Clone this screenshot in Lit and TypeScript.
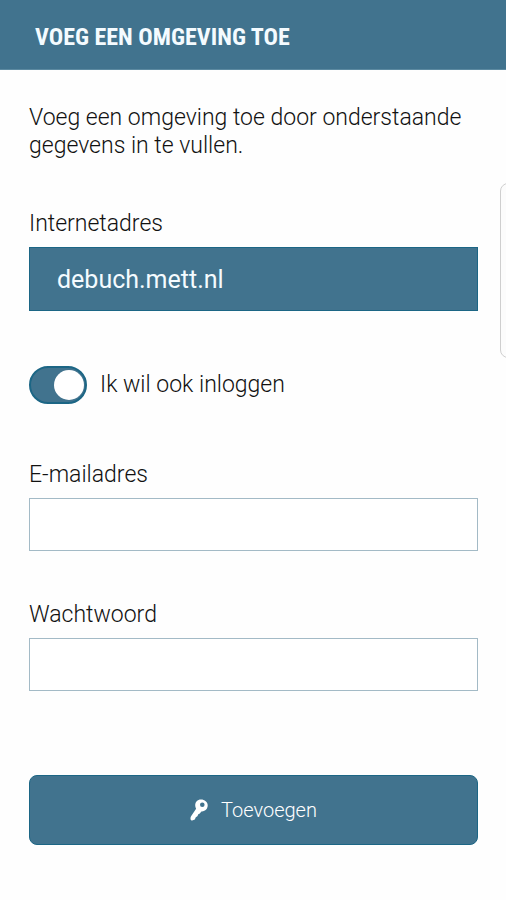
import { LitElement, html, css } from "lit";
import { customElement, state } from "lit/decorators.js";

@customElement("app-root")
export class AppRoot extends LitElement {
  @state() private login = true;

  static styles = css`
    :host {
      --brand: #41738e;
      --edge: #1c6685;
      display: block;
      position: relative;
      min-height: 100vh;
      overflow: hidden;
      background: #fefefe;
      color: #111;
      font: 300 23px/28px Roboto, "Liberation Sans", sans-serif;
    }
    * {
      box-sizing: border-box;
    }
    .bar {
      display: flex;
      align-items: center;
      height: 70px;
      padding: 4px 35px 0;
      background: var(--brand);
      border-bottom: 1px solid #5c8aa1;
      color: #f4fbff;
    }
    .title {
      margin: 0;
      font: 700 24px/28px "Roboto Condensed", Roboto, sans-serif;
      white-space: nowrap;
    }
    .form {
      display: flex;
      flex-direction: column;
      padding: 34px 28px 54px 29px;
    }
    .intro {
      margin: 0 0 50px;
    }
    .field {
      display: flex;
      flex-direction: column;
      gap: 9px;
      margin-bottom: 50px;
    }
    .input {
      width: 100%;
      height: 53px;
      margin: 0;
      padding: 0 27px;
      border: 1px solid #a3bac6;
      border-radius: 0;
      outline: none;
      background: #fff;
      color: inherit;
      font: inherit;
    }
    .address {
      height: 64px;
      border-color: var(--edge);
      background: var(--brand);
      color: #f4fbff;
      font-size: 25px;
      font-weight: 400;
    }
    .toggle {
      display: flex;
      align-items: center;
      gap: 13px;
      margin: 5px 0 57px;
    }
    .switch {
      appearance: none;
      flex: none;
      display: flex;
      align-items: center;
      width: 58px;
      height: 38px;
      margin: 0;
      padding: 0 1px;
      border: 2px solid var(--edge);
      border-radius: 19px;
      background: #c5d2d9;
    }
    .switch::before {
      content: "";
      width: 30px;
      height: 30px;
      border-radius: 50%;
      background: #fff;
    }
    .switch:checked {
      justify-content: flex-end;
      background: var(--brand);
    }
    .submit {
      display: flex;
      align-items: center;
      justify-content: center;
      gap: 13px;
      height: 70px;
      margin-top: 34px;
      padding: 0;
      border: 1px solid var(--edge);
      border-radius: 8px;
      background: var(--brand);
      color: #fff;
      font: 300 20px/28px Roboto, "Liberation Sans", sans-serif;
    }
    .key {
      width: 18px;
      height: 22px;
    }
    .edge-panel {
      position: absolute;
      top: 183px;
      right: -12px;
      width: 18px;
      height: 175px;
      border: 1px solid #cfcfcf;
      border-radius: 8px;
      background: #fcfcfc;
    }
  `;

  render() {
    return html`
      <header class="bar"><h1 class="title">VOEG EEN OMGEVING TOE</h1></header>
      <form class="form" @submit=${(e: Event) => e.preventDefault()}>
        <p class="intro">Voeg een omgeving toe door onderstaande gegevens in te vullen.</p>
        <div class="field">
          <label for="address">Internetadres</label>
          <input class="input address" id="address" type="text" value="debuch.mett.nl" />
        </div>
        <div class="toggle">
          <input
            class="switch"
            id="login"
            type="checkbox"
            role="switch"
            .checked=${this.login}
            @change=${(e: Event) => (this.login = (e.target as HTMLInputElement).checked)}
          />
          <label for="login">Ik wil ook inloggen</label>
        </div>
        <div class="field">
          <label for="email">E-mailadres</label>
          <input class="input" id="email" type="email" ?disabled=${!this.login} />
        </div>
        <div class="field">
          <label for="password">Wachtwoord</label>
          <input class="input" id="password" type="password" ?disabled=${!this.login} />
        </div>
        <button class="submit" type="submit">
          <svg class="key" viewBox="0 0 18 22" aria-hidden="true">
            <path
              fill="#fff"
              fill-rule="evenodd"
              d="M11 .5C7.300.5 5.200 3.200 5.200 6.300c0 1.300.3 2.400.9 3.400L.9 17.600c-.5.8-.6 1.900-.3 2.900.2.7.9 1.100 1.600.9l2.600-.8 1-2.300 1.600-1 .9-2 1.500-.8 1.600-2.100c4 .2 6.300-2.700 6.300-6.100C17.700 3 14.600.5 11 .5Zm1.300 3a2.300 2.300 0 1 1 0 4.600 2.300 2.300 0 0 1 0-4.600Z"
            />
          </svg>
          <span>Toevoegen</span>
        </button>
      </form>
      <aside class="edge-panel" aria-hidden="true"></aside>
    `;
  }
}
